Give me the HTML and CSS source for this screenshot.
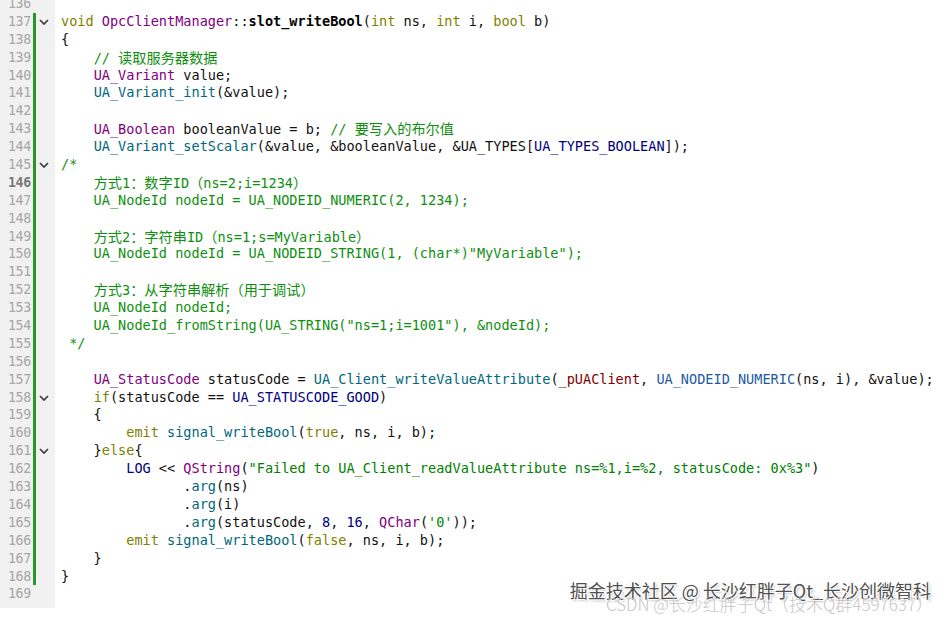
FILE: index.html
```html
<!DOCTYPE html>
<html lang="zh">
<head>
<meta charset="utf-8">
<title>OpcClientManager::slot_writeBool</title>
<link rel="stylesheet" href="styles.css">
</head>
<body>
<div class="editor">
  <div class="gutter">
    <div class="gl"><span class="num">136</span><span class="bar"></span><span class="fold"></span></div>
    <div class="gl"><span class="num">137</span><span class="bar on"></span><span class="fold"><svg viewBox="0 0 10 6" width="10" height="6"><polyline points="1,1 5,5 9,1"/></svg></span></div>
    <div class="gl"><span class="num">138</span><span class="bar on"></span><span class="fold"></span></div>
    <div class="gl"><span class="num">139</span><span class="bar on"></span><span class="fold"></span></div>
    <div class="gl"><span class="num">140</span><span class="bar on"></span><span class="fold"></span></div>
    <div class="gl"><span class="num">141</span><span class="bar on"></span><span class="fold"></span></div>
    <div class="gl"><span class="num">142</span><span class="bar on"></span><span class="fold"></span></div>
    <div class="gl"><span class="num">143</span><span class="bar on"></span><span class="fold"></span></div>
    <div class="gl"><span class="num">144</span><span class="bar on"></span><span class="fold"></span></div>
    <div class="gl"><span class="num">145</span><span class="bar on"></span><span class="fold"><svg viewBox="0 0 10 6" width="10" height="6"><polyline points="1,1 5,5 9,1"/></svg></span></div>
    <div class="gl"><span class="num cur">146</span><span class="bar on"></span><span class="fold"></span></div>
    <div class="gl"><span class="num">147</span><span class="bar on"></span><span class="fold"></span></div>
    <div class="gl"><span class="num">148</span><span class="bar on"></span><span class="fold"></span></div>
    <div class="gl"><span class="num">149</span><span class="bar on"></span><span class="fold"></span></div>
    <div class="gl"><span class="num">150</span><span class="bar on"></span><span class="fold"></span></div>
    <div class="gl"><span class="num">151</span><span class="bar on"></span><span class="fold"></span></div>
    <div class="gl"><span class="num">152</span><span class="bar on"></span><span class="fold"></span></div>
    <div class="gl"><span class="num">153</span><span class="bar on"></span><span class="fold"></span></div>
    <div class="gl"><span class="num">154</span><span class="bar on"></span><span class="fold"></span></div>
    <div class="gl"><span class="num">155</span><span class="bar on"></span><span class="fold"></span></div>
    <div class="gl"><span class="num">156</span><span class="bar on"></span><span class="fold"></span></div>
    <div class="gl"><span class="num">157</span><span class="bar on"></span><span class="fold"></span></div>
    <div class="gl"><span class="num">158</span><span class="bar on"></span><span class="fold"><svg viewBox="0 0 10 6" width="10" height="6"><polyline points="1,1 5,5 9,1"/></svg></span></div>
    <div class="gl"><span class="num">159</span><span class="bar on"></span><span class="fold"></span></div>
    <div class="gl"><span class="num">160</span><span class="bar on"></span><span class="fold"></span></div>
    <div class="gl"><span class="num">161</span><span class="bar on"></span><span class="fold"><svg viewBox="0 0 10 6" width="10" height="6"><polyline points="1,1 5,5 9,1"/></svg></span></div>
    <div class="gl"><span class="num">162</span><span class="bar on"></span><span class="fold"></span></div>
    <div class="gl"><span class="num">163</span><span class="bar on"></span><span class="fold"></span></div>
    <div class="gl"><span class="num">164</span><span class="bar on"></span><span class="fold"></span></div>
    <div class="gl"><span class="num">165</span><span class="bar on"></span><span class="fold"></span></div>
    <div class="gl"><span class="num">166</span><span class="bar on"></span><span class="fold"></span></div>
    <div class="gl"><span class="num">167</span><span class="bar on"></span><span class="fold"></span></div>
    <div class="gl"><span class="num">168</span><span class="bar on"></span><span class="fold"></span></div>
    <div class="gl"><span class="num">169</span><span class="bar"></span><span class="fold"></span></div>
  </div>
  <div class="code">
<div class="ln"></div>
<div class="ln"><span class="k">void</span> <span class="t">OpcClientManager</span>::<span class="b">slot_writeBool</span>(<span class="k">int</span> ns, <span class="k">int</span> i, <span class="k">bool</span> b)</div>
<div class="ln">{</div>
<div class="ln">    <span class="c">// <span class="cn">读取服务器数据</span></span></div>
<div class="ln">    <span class="t">UA_Variant</span> value;</div>
<div class="ln">    <span class="f">UA_Variant_init</span>(&amp;value);</div>
<div class="ln"></div>
<div class="ln">    <span class="t">UA_Boolean</span> booleanValue = b; <span class="c">// <span class="cn">要写入的布尔值</span></span></div>
<div class="ln">    <span class="f">UA_Variant_setScalar</span>(&amp;value, &amp;booleanValue, &amp;UA_TYPES[<span class="m">UA_TYPES_BOOLEAN</span>]);</div>
<div class="ln"><span class="c">/*</span></div>
<div class="ln c">    <span class="cn">方式</span>1<span class="cn">：数字</span>ID<span class="cn">（</span>ns=2;i=1234<span class="cn">）</span></div>
<div class="ln c">    UA_NodeId nodeId = UA_NODEID_NUMERIC(2, 1234);</div>
<div class="ln c"></div>
<div class="ln c">    <span class="cn">方式</span>2<span class="cn">：字符串</span>ID<span class="cn">（</span>ns=1;s=MyVariable<span class="cn">）</span></div>
<div class="ln c">    UA_NodeId nodeId = UA_NODEID_STRING(1, (char*)"MyVariable");</div>
<div class="ln c"></div>
<div class="ln c">    <span class="cn">方式</span>3<span class="cn">：从字符串解析（用于调试）</span></div>
<div class="ln c">    UA_NodeId nodeId;</div>
<div class="ln c">    UA_NodeId_fromString(UA_STRING("ns=1;i=1001"), &amp;nodeId);</div>
<div class="ln c"> */</div>
<div class="ln"></div>
<div class="ln">    <span class="t">UA_StatusCode</span> statusCode = <span class="f">UA_Client_writeValueAttribute</span>(<span class="fld">_pUAClient</span>, <span class="mb">UA_NODEID_NUMERIC</span>(ns, i), &amp;value);</div>
<div class="ln">    <span class="k">if</span>(statusCode == <span class="m">UA_STATUSCODE_GOOD</span>)</div>
<div class="ln">    {</div>
<div class="ln">        <span class="k">emit</span> <span class="f">signal_writeBool</span>(<span class="k">true</span>, ns, i, b);</div>
<div class="ln">    }<span class="k">else</span>{</div>
<div class="ln">        <span class="m">LOG</span> &lt;&lt; <span class="t">QString</span>(<span class="s">"Failed to UA_Client_readValueAttribute ns=%1,i=%2, statusCode: 0x%3"</span>)</div>
<div class="ln">               .<span class="f">arg</span>(ns)</div>
<div class="ln">               .<span class="f">arg</span>(i)</div>
<div class="ln">               .<span class="f">arg</span>(statusCode, <span class="n">8</span>, <span class="n">16</span>, <span class="t">QChar</span>(<span class="s">'0'</span>));</div>
<div class="ln">        <span class="k">emit</span> <span class="f">signal_writeBool</span>(<span class="k">false</span>, ns, i, b);</div>
<div class="ln">    }</div>
<div class="ln">}</div>
<div class="ln"></div>
  </div>
</div>
<div class="wm wm1">掘金技术社区 @ 长沙红胖子Qt_长沙创微智科</div>
<div class="wm wm2">CSDN @长沙红胖子Qt（技术Q群4597637）</div>
</body>
</html>
```

FILE: styles.css
```css
html, body {
  margin: 0;
  padding: 0;
  background: #ffffff;
  width: 947px;
  height: 618px;
  overflow: hidden;
}

body {
  position: relative;
  font-family: "DejaVu Sans Mono", "Noto Sans CJK SC", monospace;
  font-size: 13.55px;
  color: #111111;
}

.editor {
  display: flex;
  align-items: flex-start;
  margin-top: -5px;
}

.gutter {
  width: 55px;
  flex: none;
  background: #f1f1f1;
  padding-bottom: 5px;
}

.gl {
  display: flex;
  align-items: stretch;
  height: 17.9px;
  line-height: 17.9px;
}

.num {
  width: 31px;
  flex: none;
  text-align: right;
  color: #a6a6a6;
  font-size: 13.3px;
  letter-spacing: -0.3px;
}

.num.cur {
  color: #7a7a7a;
  font-weight: bold;
}

.bar {
  width: 2.5px;
  flex: none;
  margin-left: 2px;
}

.bar.on {
  background: #2a962a;
}

.fold {
  flex: 1;
  display: flex;
  align-items: center;
  justify-content: center;
  padding-right: 3px;
}

.fold svg {
  display: block;
  fill: none;
  stroke: #3c3c3c;
  stroke-width: 1.7;
}

.code {
  padding-left: 6px;
  flex: 1;
}

.ln {
  height: 17.9px;
  line-height: 17.9px;
  white-space: pre;
}

.cn {
  font-family: "Noto Sans CJK SC", sans-serif;
  font-size: 14.2px;
  line-height: 17.9px;
}

.k { color: #808000; }
.t { color: #800080; }
.f { color: #00677c; }
.m { color: #000080; }
.mb { color: #1d5a9e; }
.n { color: #000080; }
.s { color: #008000; }
.c { color: #0f8f0f; }
.fld { color: #800000; }
.b { font-weight: bold; color: #000000; }

.wm {
  position: absolute;
  white-space: nowrap;
  font-family: "Noto Sans CJK SC", sans-serif;
  line-height: 20px;
}

.wm1 {
  right: 16px;
  bottom: 18px;
  font-size: 18px;
  color: #505050;
  text-shadow: 1px 1px 0 #ffffff, -1px -1px 0 #ffffff, 1px -1px 0 #ffffff, -1px 1px 0 #ffffff, 2px 2px 2px rgba(0, 0, 0, 0.25);
}

.wm2 {
  right: 14px;
  bottom: 4px;
  font-size: 17px;
  font-weight: 300;
  color: #c6c6c6;
}
```
